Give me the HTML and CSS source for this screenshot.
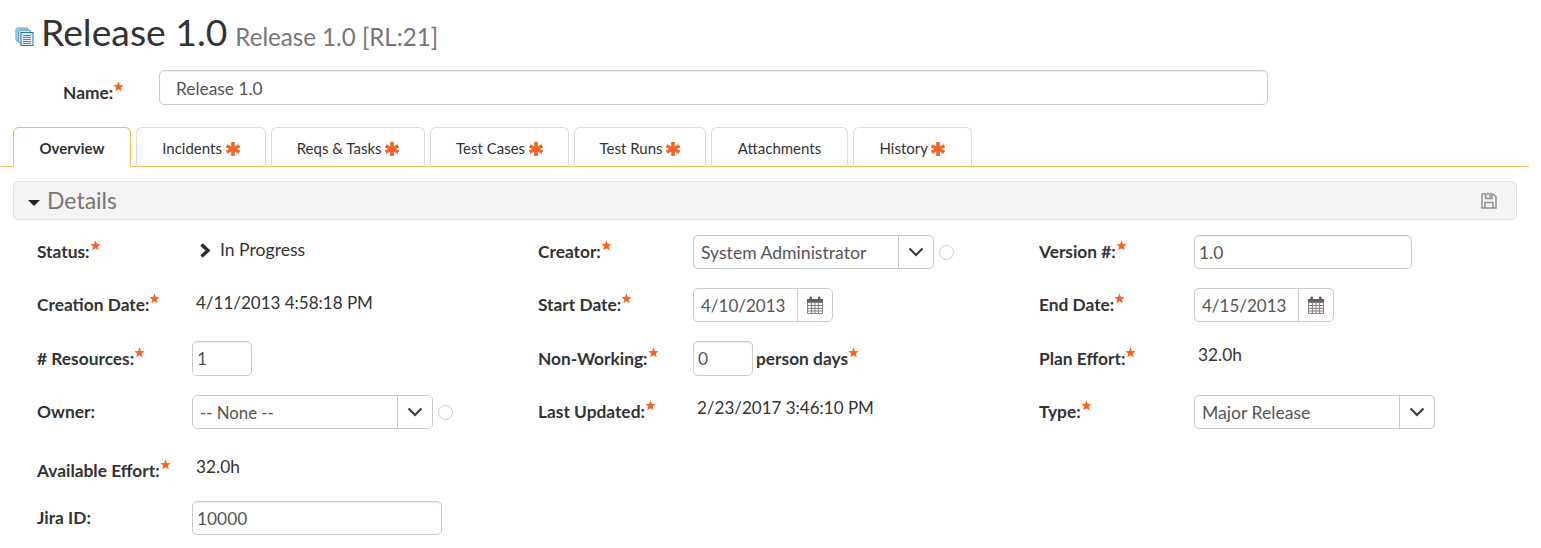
FILE: index.html
```html
<!DOCTYPE html>
<html lang="en">
<head>
    <meta charset="UTF-8">
    <meta name="viewport" content="width=device-width, initial-scale=1.0">
    <title>Release 1.0</title>
    <link rel="stylesheet" href="styles.css">
</head>
<body>
    <svg class="sprites" width="0" height="0">
        <symbol id="star" viewBox="0 0 12 12"><path d="M6 .4l1.500 3.900 4.200.2-3.300 2.600 1.100 4.100L6 8.900l-3.500 2.300 1.100-4.100L.3 4.500l4.200-.2z"/></symbol>
        <symbol id="asterisk" viewBox="0 0 14 14"><path d="M5.200 0h3.600v4.400l3.700-2.200 1.800 3.100L10.600 7l3.700 1.700-1.800 3.100-3.700-2.200V14H5.200V9.600l-3.700 2.200L-.3 8.700 3.400 7-.3 5.300l1.800-3.100 3.700 2.200z"/></symbol>
        <symbol id="chevron" viewBox="0 0 16 10"><path d="M1.500 1.500L8 8l6.500-6.500" fill="none" stroke="#333f48" stroke-width="2.200"/></symbol>
        <symbol id="calendar" viewBox="0 0 18 18">
            <path fill="#6a5f58" d="M1 3h2.500V1.500c0-1.300 2.500-1.300 2.500 0V3h6V1.500c0-1.300 2.500-1.300 2.500 0V3H17v4H1z"/>
            <path fill="#f6f3ef" d="M1.500 7h15v10h-15z"/>
            <path fill="none" stroke="#8f8391" stroke-width="1" d="M1.500 6.500h15v11h-15zM1.500 9.500h15M1.500 12.500h15M1.500 15h15M5.500 6.500v11M9 6.500v11M12.500 6.500v11"/>
        </symbol>
    </svg>

    <header class="page-title">
        <svg class="artifact-icon" viewBox="0 0 19 19" width="19" height="19">
            <rect x="1" y="1" width="12" height="13" rx="1.500" fill="#b9d8ec" stroke="#5b9cc6"/>
            <rect x="3.500" y="3" width="12" height="13" rx="1.500" fill="#cfe4f2" stroke="#4f93c0"/>
            <rect x="6" y="5.500" width="12" height="13" fill="#e8f2f9" stroke="#1f78ad"/>
            <path d="M8 8.500h8M8 10.500h8M8 12.500h8M8 14.500h8M8 16.500h8" stroke="#3f8dbd" stroke-width="1"/>
        </svg>
        <h1>Release 1.0</h1>
        <span class="title-ref">Release 1.0 [RL:21]</span>
    </header>

    <div class="name-row">
        <label class="name-label">Name:<svg class="req"><use href="#star"/></svg></label>
        <input class="text-box name-box" type="text" value="Release 1.0">
    </div>

    <ul class="tabs">
        <li class="tab tab-active tab-overview">Overview</li>
        <li class="tab tab-incidents">Incidents <svg class="tab-mark"><use href="#asterisk"/></svg></li>
        <li class="tab tab-reqs">Reqs &amp; Tasks <svg class="tab-mark"><use href="#asterisk"/></svg></li>
        <li class="tab tab-cases">Test Cases <svg class="tab-mark"><use href="#asterisk"/></svg></li>
        <li class="tab tab-runs">Test Runs <svg class="tab-mark"><use href="#asterisk"/></svg></li>
        <li class="tab tab-attach">Attachments</li>
        <li class="tab tab-history">History <svg class="tab-mark"><use href="#asterisk"/></svg></li>
    </ul>

    <div class="panel-head">
        <span class="caret"></span>
        <span class="panel-title">Details</span>
        <svg class="save-icon" viewBox="0 0 16 16" width="16" height="16">
            <path d="M1 1h11l3 3v11H1z" fill="none" stroke="#909090" stroke-width="1.500"/>
            <path d="M4.500 1v4.500h6.500V1M9 2v2.500" fill="none" stroke="#909090" stroke-width="1.500"/>
            <path d="M4 15V9.500h8V15" fill="none" stroke="#909090" stroke-width="1.500"/>
        </svg>
    </div>

    <div class="fields">
        <div class="field">
            <label>Status:<svg class="req"><use href="#star"/></svg></label>
            <div class="value value-status">
                <svg class="status-icon" viewBox="0 0 13 15" width="13" height="15"><path d="M2.500 1.500L9 7.500l-6.500 6" fill="none" stroke="#2b2b2b" stroke-width="3.400"/></svg>
                In Progress
            </div>
        </div>
        <div class="field">
            <label>Creator:<svg class="req"><use href="#star"/></svg></label>
            <div class="pick">
                <input class="pick-text" type="text" value="System Administrator">
                <span class="pick-btn"><svg class="chevron"><use href="#chevron"/></svg></span>
            </div>
            <span class="radio"></span>
        </div>
        <div class="field">
            <label>Version #:<svg class="req"><use href="#star"/></svg></label>
            <input class="text-box version-box" type="text" value="1.0">
        </div>

        <div class="field">
            <label>Creation Date:<svg class="req"><use href="#star"/></svg></label>
            <div class="value value-date">4/11/2013 4:58:18 PM</div>
        </div>
        <div class="field">
            <label>Start Date:<svg class="req"><use href="#star"/></svg></label>
            <div class="pick pick-date">
                <input class="pick-text" type="text" value="4/10/2013">
                <span class="pick-btn"><svg class="cal"><use href="#calendar"/></svg></span>
            </div>
        </div>
        <div class="field">
            <label>End Date:<svg class="req"><use href="#star"/></svg></label>
            <div class="pick pick-date">
                <input class="pick-text" type="text" value="4/15/2013">
                <span class="pick-btn"><svg class="cal"><use href="#calendar"/></svg></span>
            </div>
        </div>

        <div class="field field-low">
            <label># Resources:<svg class="req"><use href="#star"/></svg></label>
            <input class="text-box small-box" type="text" value="1">
        </div>
        <div class="field field-low">
            <label>Non-Working:<svg class="req"><use href="#star"/></svg></label>
            <input class="text-box small-box" type="text" value="0">
            <span class="unit">person days<svg class="req"><use href="#star"/></svg></span>
        </div>
        <div class="field field-low">
            <label>Plan Effort:<svg class="req"><use href="#star"/></svg></label>
            <div class="value">32.0h</div>
        </div>

        <div class="field">
            <label>Owner:</label>
            <div class="pick">
                <input class="pick-text pick-none" type="text" value="-- None --">
                <span class="pick-btn"><svg class="chevron"><use href="#chevron"/></svg></span>
            </div>
            <span class="radio"></span>
        </div>
        <div class="field">
            <label>Last Updated:<svg class="req"><use href="#star"/></svg></label>
            <div class="value value-date value-updated">2/23/2017 3:46:10 PM</div>
        </div>
        <div class="field">
            <label>Type:<svg class="req"><use href="#star"/></svg></label>
            <div class="pick">
                <input class="pick-text" type="text" value="Major Release">
                <span class="pick-btn"><svg class="chevron"><use href="#chevron"/></svg></span>
            </div>
        </div>

        <div class="field field-first">
            <label>Available Effort:<svg class="req"><use href="#star"/></svg></label>
            <div class="value value-avail">32.0h</div>
        </div>
        <div class="field field-first">
            <label>Jira ID:</label>
            <input class="text-box jira-box" type="text" value="10000">
        </div>
    </div>
</body>
</html>
```

FILE: styles.css
```css
*{
    box-sizing: border-box;
}
body{
    margin: 0;
    height: 548px;
    overflow: hidden;
    background: #fff;
    font-family: "Lato", "Open Sans", sans-serif;
    font-size: 17.33px;
    color: #333;
}
.sprites{
    position: absolute;
}

/* title */
.page-title{
    display: flex;
    align-items: baseline;
    height: 70px;
    padding: 8px 0 0 15px;
}
.artifact-icon{
    align-self: flex-start;
    margin: 19px 7px 0 0;
    flex: none;
}
h1{
    margin: 0;
    font-size: 37.3px;
    line-height: 48px;
    font-weight: 400;
    color: #333;
}
.title-ref{
    margin-left: 8px;
    font-size: 24.1px;
    color: #777;
}

/* name */
.name-row{
    display: flex;
    align-items: flex-start;
    padding-left: 63px;
    height: 57px;
}
.name-label{
    width: 96px;
    flex: none;
    font-weight: 700;
    padding-top: 11px;
    line-height: 24px;
}
.text-box{
    height: 35px;
    border: 1px solid #ccc;
    border-radius: 5px;
    padding: 0 4px;
    font-family: inherit;
    font-size: 17.33px;
    color: #555;
    background: #fff;
    box-shadow: inset 0 1px 1px rgba(0,0,0,.08);
}
.name-box{
    width: 1109px;
    padding: 1px 4px 0 16px;
}
.req{
    width: 11px;
    height: 11px;
    fill: #f26522;
    vertical-align: 7px;
}

/* tabs */
.tabs{
    display: flex;
    gap: 5px;
    list-style: none;
    margin: 0 12px 0 1px;
    padding: 0 0 0 12px;
    height: 40px;
    border-bottom: 1px solid #f6bb55;
}
.tab{
    height: 40px;
    border: 1px solid #ddd;
    border-bottom: 1px solid #f6bb55;
    border-radius: 6px 6px 0 0;
    font-size: 15px;
    line-height: 41px;
    text-align: center;
    background: #fff;
}
.tab-active{
    border-color: #f6bb55;
    border-bottom-color: #fff;
    font-weight: 700;
}
.tab-overview{ width: 118px; }
.tab-incidents{ width: 130px; }
.tab-reqs{ width: 154px; }
.tab-cases{ width: 139px; }
.tab-runs{ width: 132px; }
.tab-attach{ width: 137px; }
.tab-history{ width: 119px; }
.tab-mark{
    width: 14px;
    height: 14px;
    fill: #f26522;
    vertical-align: -2px;
}

/* details bar */
.panel-head{
    display: flex;
    align-items: center;
    width: 1504px;
    height: 39px;
    margin: 14px 0 0 13px;
    padding: 0 19px 0 14px;
    background: #f4f4f4;
    border: 1px solid #e1e1e1;
    border-radius: 5px;
}
.caret{
    width: 0;
    height: 0;
    margin: 5px 7px 0 0;
    border-left: 6px solid transparent;
    border-right: 6px solid transparent;
    border-top: 6px solid #222;
}
.panel-title{
    flex: 1;
    font-size: 23px;
    line-height: 36px;
    padding-bottom: 2px;
    color: #777;
}

/* fields */
.fields{
    display: grid;
    grid-template-columns: repeat(3, 501px);
    grid-template-rows: 53px 53px 54px 59px 47px 34px;
    padding: 15px 0 0 37px;
}
.field{
    display: flex;
    align-items: flex-start;
}
.field-first{
    grid-column: 1;
}
.field label{
    width: 155px;
    flex: none;
    font-weight: 700;
    line-height: 34px;
}
.field-low label{
    line-height: 35px;
}
.value{
    padding: 2px 0 0 4px;
    line-height: 24px;
}
.value-status{
    display: flex;
    align-items: center;
    gap: 8px;
    padding: 3px 0 0 7px;
    font-size: 17.6px;
}
.status-icon{
    flex: none;
}
.value-date{
    padding-top: 3px;
    font-size: 17px;
}
.value-updated{
    padding-top: 1px;
}
.value-avail{
    padding-top: 1px;
}
.pick{
    display: flex;
    width: 241px;
    height: 34px;
    border: 1px solid #ccc;
    border-radius: 5px;
    background: #fff;
}
.pick-date{
    width: 140px;
}
.pick-text{
    flex: 1;
    width: 0;
    border: 0;
    background: none;
    padding: 0 7px;
    font-family: inherit;
    font-size: 17.6px;
    color: #555;
}
.pick-date .pick-text{
    font-size: 17px;
}
.pick-text.pick-none{
    font-size: 16.8px;
}
.pick-btn{
    display: flex;
    align-items: center;
    justify-content: center;
    flex: none;
    width: 35px;
    border-left: 1px solid #ccc;
}
.chevron{
    width: 16px;
    height: 10px;
}
.cal{
    width: 18px;
    height: 18px;
}
.radio{
    width: 15px;
    height: 15px;
    margin: 10px 0 0 5px;
    border: 1px solid #ccc;
    border-radius: 50%;
}
.version-box{
    width: 218px;
    height: 34px;
}
.small-box{
    width: 60px;
}
.jira-box{
    width: 250px;
    height: 34px;
}
.unit{
    margin-left: 3px;
    font-weight: 700;
    line-height: 36px;
}
```
